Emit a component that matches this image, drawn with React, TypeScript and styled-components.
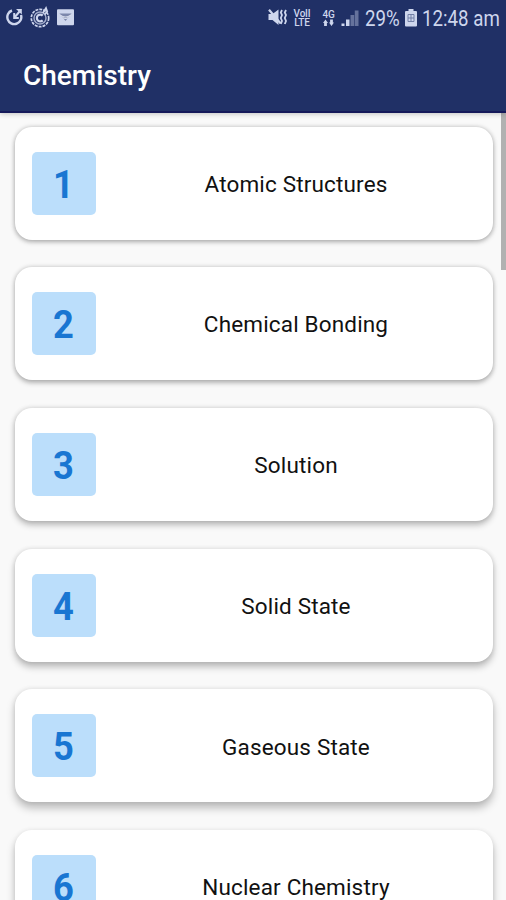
import React from "react";
import styled, { createGlobalStyle } from "styled-components";

const GlobalStyle = createGlobalStyle`
  * { box-sizing: border-box; }
  html, body { margin: 0; padding: 0; height: 100%; overflow: hidden; }
  body { font-family: Roboto, sans-serif; background: #f9f9f9; }
  #root { height: 100%; }
`;

const Screen = styled.div`
  height: 900px;
  width: 506px;
  display: flex;
  flex-direction: column;
  overflow: hidden;
  background: #f9f9f9;
`;

const Header = styled.header`
  flex: none;
  height: 113px;
  background: #203066;
  border-bottom: 2px solid #15195a;
  box-shadow: 0 1px 5px rgba(0, 0, 0, 0.22);
  z-index: 1;
`;

const StatusBar = styled.div`
  height: 36px;
  padding: 0 6px;
  display: flex;
  align-items: center;
  justify-content: space-between;
  color: #ced6ed;
`;

const StatusGroup = styled.div`
  display: flex;
  align-items: center;
  height: 36px;
`;

const StatusIcon = styled.svg`
  display: block;
  flex: none;
`;

const StatusText = styled.span<{ $width: number; $left: number; $right?: number }>`
  flex: none;
  width: ${(p) => p.$width}px;
  margin-left: ${(p) => p.$left}px;
  margin-right: ${(p) => p.$right ?? 0}px;
  font-size: 22px;
  line-height: 36px;
  padding-top: 1px;
  white-space: nowrap;
  transform: scaleX(0.85);
  transform-origin: left center;
`;

const Title = styled.h1`
  margin: 0;
  padding: 21px 0 0 23px;
  color: #fff;
  font-size: 28px;
  line-height: 38px;
  font-weight: 500;
`;

const Content = styled.main`
  flex: 1;
  min-height: 0;
  display: flex;
  justify-content: space-between;
  overflow: hidden;
`;

const ChapterList = styled.ul`
  list-style: none;
  margin: 0;
  padding: 13.5px 0 0 14.5px;
  display: flex;
  flex-direction: column;
  gap: 27.7px;
`;

const Card = styled.li<{ $depth: number }>`
  flex: none;
  width: 478px;
  height: 113px;
  padding-left: 17.5px;
  display: flex;
  align-items: center;
  border-radius: 17px;
  background: #fff;
  box-shadow:
    0 ${(p) => 2 + p.$depth * 0.9}px ${(p) => 5 + p.$depth * 0.8}px rgba(0, 0, 0, 0.25),
    0 0 5px rgba(0, 0, 0, ${(p) => 0.17 - p.$depth * 0.02});
`;

const NumberTile = styled.div`
  flex: none;
  width: 63.5px;
  height: 63px;
  border-radius: 5px;
  background: #bbdefb;
  color: #1976d2;
  font-size: 39.5px;
  line-height: 66px;
  font-weight: 700;
  text-align: center;
`;

const Numeral = styled.span`
  display: inline-block;
  transform: scaleX(0.92);
`;

const ChapterName = styled.span`
  flex: 1;
  padding: 1.5px 0 0 4px;
  text-align: center;
  color: #111;
  font-size: 22.5px;
  line-height: 30px;
  letter-spacing: 0.16px;
`;

const ScrollThumb = styled.div`
  width: 5px;
  height: 157px;
  background: #b1b1b1;
`;

const chapters = [
  "Atomic Structures",
  "Chemical Bonding",
  "Solution",
  "Solid State",
  "Gaseous State",
  "Nuclear Chemistry",
];

function NotificationIcons() {
  return (
    <StatusIcon width="70" height="26" viewBox="6 5 70 26" fill="none" stroke="currentColor">
      <path d="M12 10.5a7 7 0 1 0 9 4.5" strokeWidth="2.4" />
      <path d="M14.2 13v5h4.6M14.5 17.5l5-6" strokeWidth="2" />
      <path d="M16 9h5.8v5.6z" fill="currentColor" stroke="none" />
      <circle cx="40" cy="18" r="8.7" strokeWidth="1.7" strokeDasharray="3 1" />
      <circle cx="40" cy="18" r="6" strokeWidth="1.5" opacity=".75" />
      <path d="M42.7 15.6a3.4 3.4 0 1 0 0 4.8" strokeWidth="2.2" />
      <path d="M43 13l3-5 1.2 3.5-2.5 3" strokeWidth="1.8" />
      <rect x="57" y="9.3" width="17" height="16" rx="1" fill="currentColor" stroke="none" />
      <path d="M59.5 13.5h12l-6 7.5z" fill="#7c87ab" stroke="none" />
      <path d="M60 15q5.5 4 11 0M62.5 17.5q3 2 6 0" stroke="#d7ddec" strokeWidth="1.2" />
    </StatusIcon>
  );
}

function MuteIcon() {
  return (
    <StatusIcon width="20" height="20" viewBox="268 8 20 20" fill="none" stroke="currentColor">
      <path d="M268.5 14h4l6-4.5v15.5l-6-5h-4z" fill="currentColor" stroke="none" />
      <path d="M269 9.8l11.5 13.5" strokeWidth="2.2" />
      <path d="M282 10l-1.2 2.5 1.2 2.5-1.2 3 1.2 3-1.2 3M286 10l-1.2 2.5 1.2 2.5-1.2 3 1.2 3-1.2 3" strokeWidth="1.8" />
    </StatusIcon>
  );
}

const NetworkBlock = styled.div<{ $left: number; $width: number }>`
  flex: none;
  width: ${(p) => p.$width}px;
  margin-left: ${(p) => p.$left}px;
  display: flex;
  flex-direction: column;
  align-items: center;
  font-size: 10px;
  line-height: 9px;
  font-weight: 500;
  letter-spacing: -0.2px;
  white-space: nowrap;
`;

const NetworkLabel = styled.span<{ $height: number }>`
  display: block;
  height: ${(p) => p.$height}px;
  line-height: ${(p) => p.$height}px;
`;

function DataArrows() {
  return (
    <StatusIcon width="11" height="8" viewBox="0 0 11 8" fill="currentColor">
      <path d="M0 4L2.5 0.5L5 4H3.9V7H1.1V4zM6 3.5h1.1V0.5h2.8v3H11L8.5 7z" />
    </StatusIcon>
  );
}

const SignalSvg = styled(StatusIcon)`
  margin-left: 5px;
`;

function SignalIcon() {
  return (
    <SignalSvg width="18" height="18" viewBox="341 8 18 18" fill="currentColor">
      <path d="M341.5 22.5h3v2.5h-3zM346 18.5h3.5V25H346z" />
      <path d="M350.5 14h3.7v11h-3.7zM354.8 9.5h3.7V25h-3.7z" opacity=".4" />
    </SignalSvg>
  );
}

function BatteryIcon() {
  return (
    <StatusIcon width="12" height="18" viewBox="0 0 12 18">
      <path d="M3.5 0h5v2H11a1 1 0 0 1 1 1v13.5a1 1 0 0 1-1 1H1a1 1 0 0 1-1-1V3a1 1 0 0 1 1-1h2.5z" fill="currentColor" />
      <path d="M3 5.5h6v7H3zM6 5v8M3 9h6" fill="none" stroke="#7380a7" />
    </StatusIcon>
  );
}

export default function App() {
  return (
    <>
      <GlobalStyle />
      <Screen>
        <Header>
          <StatusBar>
            <StatusGroup>
              <NotificationIcons />
            </StatusGroup>
            <StatusGroup>
              <MuteIcon />
              <NetworkBlock $left={5} $width={18}>
                <NetworkLabel $height={9}>VoII</NetworkLabel>
                <NetworkLabel $height={9}>LTE</NetworkLabel>
              </NetworkBlock>
              <NetworkBlock $left={10} $width={15}>
                <NetworkLabel $height={9}>4G</NetworkLabel>
                <DataArrows />
              </NetworkBlock>
              <SignalIcon />
              <StatusText $width={40} $left={6}>29%</StatusText>
              <BatteryIcon />
              <StatusText $width={88} $left={5} $right={-10}>12:48 am</StatusText>
            </StatusGroup>
          </StatusBar>
          <Title>Chemistry</Title>
        </Header>
        <Content>
          <ChapterList>
            {chapters.map((name, i) => (
              <Card key={name} $depth={i}>
                <NumberTile>
                  <Numeral>{i + 1}</Numeral>
                </NumberTile>
                <ChapterName>{name}</ChapterName>
              </Card>
            ))}
          </ChapterList>
          <ScrollThumb />
        </Content>
      </Screen>
    </>
  );
}
